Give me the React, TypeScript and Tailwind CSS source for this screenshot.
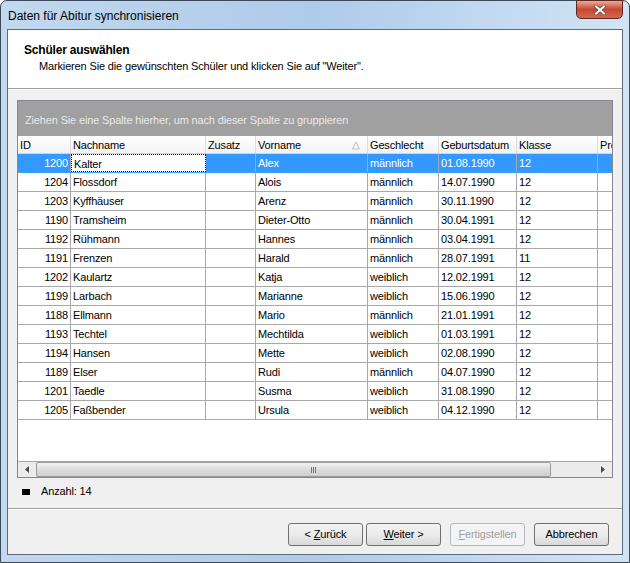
import React from 'react'

// Wizard dialog: pick students for Abitur sync
const rows = [
  ['1200', 'Kalter', '', 'Alex', 'männlich', '01.08.1990', '12'],
  ['1204', 'Flossdorf', '', 'Alois', 'männlich', '14.07.1990', '12'],
  ['1203', 'Kyffhäuser', '', 'Arenz', 'männlich', '30.11.1990', '12'],
  ['1190', 'Tramsheim', '', 'Dieter-Otto', 'männlich', '30.04.1991', '12'],
  ['1192', 'Rühmann', '', 'Hannes', 'männlich', '03.04.1991', '12'],
  ['1191', 'Frenzen', '', 'Harald', 'männlich', '28.07.1991', '11'],
  ['1202', 'Kaulartz', '', 'Katja', 'weiblich', '12.02.1991', '12'],
  ['1199', 'Larbach', '', 'Marianne', 'weiblich', '15.06.1990', '12'],
  ['1188', 'Ellmann', '', 'Mario', 'männlich', '21.01.1991', '12'],
  ['1193', 'Techtel', '', 'Mechtilda', 'weiblich', '01.03.1991', '12'],
  ['1194', 'Hansen', '', 'Mette', 'weiblich', '02.08.1990', '12'],
  ['1189', 'Elser', '', 'Rudi', 'männlich', '04.07.1990', '12'],
  ['1201', 'Taedle', '', 'Susma', 'weiblich', '31.08.1990', '12'],
  ['1205', 'Faßbender', '', 'Ursula', 'weiblich', '04.12.1990', '12'],
]

const colW = ['w-[53px]', 'w-[135px]', 'w-[50px]', 'w-[112px]', 'w-[71px]', 'w-[78px]', 'w-[81px]']
const headers = ['ID', 'Nachname', 'Zusatz', 'Vorname', 'Geschlecht', 'Geburtsdatum', 'Klasse']

function WizButton({ children, disabled }: { children: React.ReactNode; disabled?: boolean }) {
  return (
    <button
      className={`w-[75px] h-[23px] rounded-[3px] border text-[11px] ${
        disabled
          ? 'border-[#b5b9bd] bg-[#f4f4f4] text-[#a0a0a0]'
          : 'border-[#707070] bg-gradient-to-b from-[#f2f2f2] via-[#ebebeb] to-[#d9d9d9] text-black'
      }`}
    >
      {children}
    </button>
  )
}

export default function App() {
  return (
    <div
      className="w-[630px] h-[563px] flex flex-col rounded-t-[7px] border border-[#3b4a5a] bg-gradient-to-r from-[#c2d8ef] via-[#aecbea] to-[#d2e4f6] text-black"
      style={{ fontFamily: '"Liberation Sans", Arial, sans-serif' }}
    >
      {/* title bar */}
      <div className="h-[28px] flex items-start justify-between shrink-0">
        <div className="pl-[7px] pt-[6px] text-[12px] text-black">Daten für Abitur synchronisieren</div>
        <div className="mr-[6px] w-[47px] h-[19px] -mt-px rounded-b-[5px] border border-[#5a2a22] bg-gradient-to-b from-[#e9a99a] via-[#c8452f] to-[#d26a52] flex items-center justify-center">
          <svg width="12" height="10" viewBox="0 0 12 10">
            <path d="M2 1.5 L10 8.5 M10 1.5 L2 8.5" stroke="#6b4a46" strokeWidth="3.6" strokeLinecap="square" fill="none" />
            <path d="M2 1.5 L10 8.5 M10 1.5 L2 8.5" stroke="#ffffff" strokeWidth="2" strokeLinecap="square" fill="none" />
          </svg>
        </div>
      </div>

      {/* client area */}
      <div className="flex-1 mx-[6px] mb-[7px] border border-[#5d6b7a] bg-[#f0f0f0] flex flex-col tracking-[-0.15px]">
        <div className="h-[59px] bg-white border-b border-[#a0a0a0] shrink-0 pt-[13px] pl-[16px]">
          <div className="text-[12px] font-bold leading-[15px] tracking-[-0.2px]">Schüler auswählen</div>
          <div className="text-[11px] leading-[15px] pl-[15px] pt-px">
            Markieren Sie die gewünschten Schüler und klicken Sie auf "Weiter".
          </div>
        </div>
        <div className="h-px bg-white shrink-0" />

        {/* grid */}
        <div className="mt-[10px] ml-[9px] w-[596px] h-[378px] border border-[#828790] bg-white flex flex-col text-[11px] overflow-hidden">
          <div className="h-[35px] bg-[#a0a0a0] text-[#e8e8e8] pl-[7px] pt-[11px] shrink-0">
            Ziehen Sie eine Spalte hierher, um nach dieser Spalte zu gruppieren
          </div>
          <div className="h-[18px] flex bg-gradient-to-b from-white to-[#f1f2f3] border-b border-[#d5d5d5] shrink-0">
            {headers.map((h, i) => (
              <div
                key={h}
                className={`${colW[i]} shrink-0 border-r border-[#dcdcdc] pl-[2px] leading-[18px] flex justify-between pr-[7px]`}
              >
                <span>{h}</span>
                {h === 'Vorname' && <span className="text-[#a0a0a0] text-[10px]">△</span>}
              </div>
            ))}
            <div className="flex-1 min-w-0 pl-[2px] leading-[18px] overflow-hidden whitespace-nowrap">Pro</div>
          </div>

          {rows.map((r, ri) => {
            const sel = ri === 0
            return (
              <div
                key={r[0]}
                className={`h-[19px] flex shrink-0 border-b ${
                  sel ? 'bg-[#3399ff] text-white border-dotted border-[#c8864a]' : 'border-[#a8a8a8]'
                }`}
              >
                {r.map((c, ci) => (
                  <div
                    key={ci}
                    className={`${colW[ci]} shrink-0 leading-[19px] px-[2px] whitespace-nowrap overflow-hidden ${
                      ci === 0 ? 'text-right' : ''
                    } ${
                      sel && ci === 1
                        ? 'bg-white text-black border border-dotted border-black leading-[17px]'
                        : 'border-r border-[#a8a8a8]'
                    }`}
                  >
                    {c}
                  </div>
                ))}
                <div className="flex-1" />
              </div>
            )
          })}
          <div className="flex-1" />

          {/* horizontal scrollbar */}
          <div className="h-[16px] flex border-t border-[#a8a8a8] bg-[#ececec] shrink-0">
            <div className="w-[18px] flex items-center justify-center">
              <svg width="4" height="7" viewBox="0 0 4 7"><path d="M4 0 L0 3.5 L4 7 Z" fill="#4a4a4a" /></svg>
            </div>
            <div className="w-[515px] rounded-[2px] border border-[#9a9a9a] bg-gradient-to-b from-[#f3f3f3] via-[#dcdcdc] to-[#cfcfcf] flex items-center justify-center">
              <div className="flex gap-[1px] ml-[40px]">
                <div className="w-px h-[6px] bg-[#777]" />
                <div className="w-px h-[6px] bg-[#777]" />
                <div className="w-px h-[6px] bg-[#777]" />
              </div>
            </div>
            <div className="flex-1 flex items-center justify-end pr-[7px]">
              <svg width="4" height="7" viewBox="0 0 4 7"><path d="M0 0 L4 3.5 L0 7 Z" fill="#4a4a4a" /></svg>
            </div>
          </div>
        </div>

        <div className="h-[27px] flex items-center pl-[14px] text-[11px] shrink-0">
          <div className="w-[8px] h-[6px] bg-black mr-[11px]" />
          <span>Anzahl: 14</span>
        </div>

        <div className="mt-[3px] h-px bg-[#a0a0a0] shrink-0" />
        <div className="h-px bg-white shrink-0" />

        <div className="flex justify-end pt-[13px] pr-[13px]">
          <WizButton>
            &lt; <span className="underline">Z</span>urück
          </WizButton>
          <div className="w-[3px]" />
          <WizButton>
            <span className="underline">W</span>eiter &gt;
          </WizButton>
          <div className="w-[9px]" />
          <WizButton disabled>
            <span className="underline">F</span>ertigstellen
          </WizButton>
          <div className="w-[9px]" />
          <WizButton>Abbrechen</WizButton>
        </div>
      </div>
    </div>
  )
}
